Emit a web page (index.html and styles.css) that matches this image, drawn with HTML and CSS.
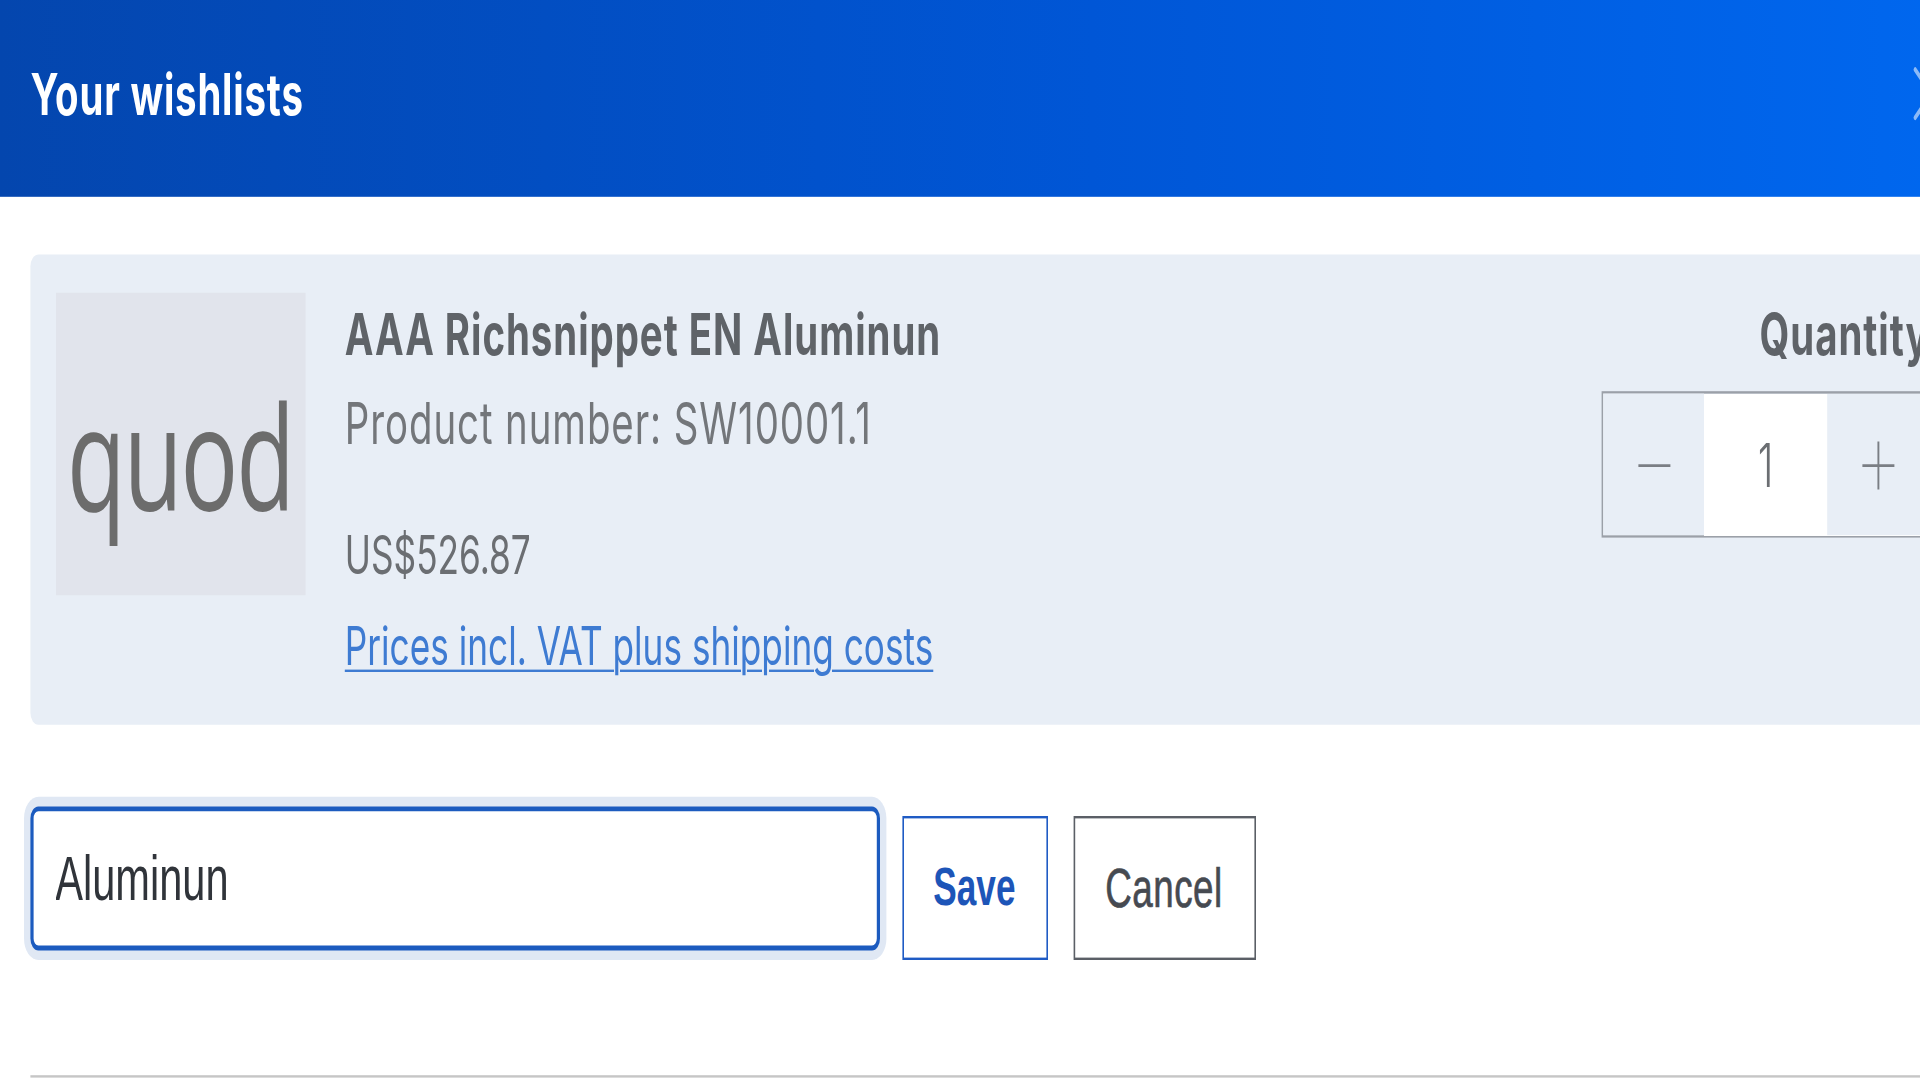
FILE: index.html
```html
<!DOCTYPE html>
<html lang="en">
<head>
<meta charset="utf-8">
<title>Your wishlists</title>
<link rel="stylesheet" href="styles.css">
</head>
<body>
<div class="page">
  <header class="modal-header">
    <h1 class="modal-title">Your wishlists</h1>
    <button class="close-btn" aria-label="Close">
      <svg viewBox="0 0 24 24" width="24" height="24"><path d="M2 2 L22 22 M22 2 L2 22" stroke="currentColor" stroke-width="2" stroke-linecap="round" fill="none"/></svg>
    </button>
  </header>
  <main class="modal-body">
    <div class="item-card">
      <div class="item-image"><span>quod</span></div>
      <div class="item-info">
        <div class="item-name">AAA Richsnippet EN Aluminun</div>
        <div class="item-number">Product number: SW10001.1</div>
        <div class="item-price">US$526.87</div>
        <a class="item-vat" href="#">Prices incl. VAT plus shipping costs</a>
      </div>
      <div class="item-qty">
        <div class="qty-label">Quantity</div>
        <div class="qty-box">
          <button class="qty-btn" aria-label="Decrease">
            <svg viewBox="0 0 22 22" width="22" height="22"><path d="M1 11 H21" stroke="currentColor" stroke-width="1.2" fill="none"/></svg>
          </button>
          <div class="qty-value">1</div>
          <button class="qty-btn" aria-label="Increase">
            <svg viewBox="0 0 22 22" width="22" height="22"><path d="M1 11 H21 M11 1 V21" stroke="currentColor" stroke-width="1.2" fill="none"/></svg>
          </button>
        </div>
      </div>
    </div>
    <form class="rename-row">
      <input class="rename-input" type="text" value="Aluminun">
      <button class="btn btn-save" type="button">Save</button>
      <button class="btn btn-cancel" type="button">Cancel</button>
    </form>
    <hr class="divider">
  </main>
</div>
</body>
</html>
```
FILE: styles.css
```css
html, body {
  margin: 0;
  padding: 0;
  background: #ffffff;
  overflow: hidden;
}
body {
  width: 1920px;
  height: 1080px;
}
.page {
  width: 1240px;
  height: 450px;
  transform: scale(1.6, 2.4);
  transform-origin: 0 0;
  font-family: "Inter", "Liberation Sans", sans-serif;
}
.modal-header {
  height: 82px;
  box-sizing: border-box;
  display: flex;
  align-items: center;
  justify-content: space-between;
  padding: 0 21px 3px 19px;
  background: linear-gradient(90deg, #0446ae 0%, #0056d6 55%, #0068f0 100%);
}
.modal-title {
  margin: 0;
  font-size: 24px;
  line-height: 32px;
  font-weight: 700;
  color: #ffffff;
  letter-spacing: 0.5px;
}
.close-btn {
  border: 0;
  background: none;
  padding: 0;
  width: 24px;
  height: 24px;
  margin-top: -2px;
  color: rgba(255, 255, 255, 0.55);
  display: flex;
}
.modal-body {
  padding: 24px 19px 0 19px;
}
.item-card {
  display: flex;
  background: #e8eef6;
  border-radius: 5px;
  padding: 15.5px 15px 17.5px 15.5px;
}
.item-image {
  width: 156px;
  height: 126px;
  flex: none;
  background: #e1e4ec;
  display: flex;
  align-items: center;
  justify-content: center;
  box-sizing: border-box;
  padding-top: 11px;
}
.item-image span {
  font-family: "Open Sans", sans-serif;
  font-size: 60px;
  line-height: 60px;
  color: #6c6c6c;
  letter-spacing: -1.3px;
}
.item-info {
  flex: 1;
  display: flex;
  flex-direction: column;
  align-items: flex-start;
  margin-left: 25px;
  padding-top: 2.5px;
}
.item-name {
  font-size: 24px;
  line-height: 32px;
  font-weight: 700;
  color: #5f6368;
  letter-spacing: 0.6px;
}
.item-number {
  margin-top: 4.6px;
  font-size: 24px;
  line-height: 32px;
  color: #73767a;
  letter-spacing: 0.58px;
}
.item-price {
  margin-top: 23.5px;
  font-size: 22px;
  line-height: 30px;
  color: #6b6e72;
}
.item-vat {
  margin-top: 8px;
  font-size: 22px;
  line-height: 30px;
  color: #3e7bd2;
  text-decoration: underline;
  text-decoration-thickness: 1px;
  text-underline-offset: 2px;
}
.item-qty {
  display: flex;
  flex-direction: column;
  align-items: flex-end;
  padding-top: 2.5px;
}
.qty-label {
  font-size: 24px;
  line-height: 32px;
  font-weight: 700;
  color: #5f6368;
  letter-spacing: 0.6px;
}
.qty-box {
  margin-top: 7px;
  display: flex;
  height: 61px;
  box-sizing: border-box;
  border: 1px solid #9ba0a8;
}
.qty-btn {
  width: 63px;
  border: 0;
  padding: 0;
  background: #e8eef6;
  color: #7a7e84;
  display: flex;
  align-items: center;
  justify-content: center;
}
.qty-value {
  width: 77px;
  background: #ffffff;
  display: flex;
  align-items: center;
  justify-content: center;
  font-size: 25px;
  font-weight: 300;
  color: #6b6e72;
}
.rename-row {
  display: flex;
  align-items: flex-start;
  margin: 34px 0 0 0;
}
.rename-input {
  width: 531px;
  height: 60px;
  box-sizing: border-box;
  border: 2px solid #1c5bbf;
  border-radius: 5px;
  box-shadow: 0 0 0 4px #e0e8f4;
  padding: 2px 0 0 13.5px;
  font-family: "Liberation Sans", Arial, sans-serif;
  font-size: 26px;
  color: #30343a;
  outline: none;
  background: #ffffff;
}
.btn {
  height: 60px;
  margin-top: 4.6px;
  box-sizing: border-box;
  background: #ffffff;
  font-family: "Liberation Sans", Arial, sans-serif;
  font-size: 22px;
  padding: 0;
  border-radius: 0;
}
.btn-save {
  width: 91px;
  margin-left: 13.5px;
  border: 1px solid #1f5bc4;
  color: #1d55b8;
  font-weight: 700;
}
.btn-cancel {
  width: 114px;
  margin-left: 16px;
  border: 1px solid #5b5f66;
  color: #464a51;
  font-weight: 400;
  font-size: 23px;
  letter-spacing: 0.3px;
  -webkit-text-stroke: 0.3px #464a51;
}
.divider {
  margin: 48px 0 0 0;
  border: 0;
  border-top: 1px solid #c6c6c6;
  height: 0;
}
```
